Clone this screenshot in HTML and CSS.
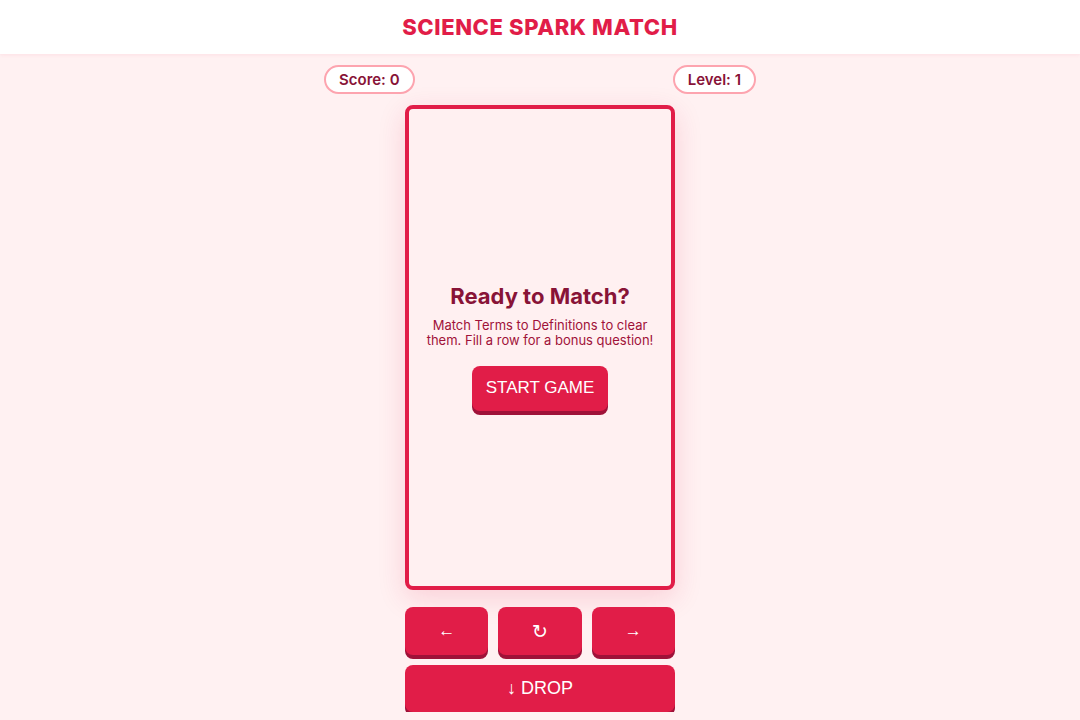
FILE: index.html
```html
<!DOCTYPE html>
<html lang="en">
<head>
    <meta charset="UTF-8">
    <meta name="viewport" content="width=device-width, initial-scale=1.0">
    <title>Science Spark Match</title>
    <link rel="stylesheet" href="styles.css">
</head>
<body>

    <header class="topbar">
        <h1 class="title">SCIENCE SPARK MATCH</h1>
    </header>

    <main class="game">
        <div class="stats">
            <span class="pill">Score: 0</span>
            <span class="pill">Level: 1</span>
        </div>

        <div class="board">
            <div class="intro">
                <h2>Ready to Match?</h2>
                <p>Match Terms to Definitions to clear them. Fill a row for a bonus question!</p>
                <button class="btn start">START GAME</button>
            </div>
        </div>

        <div class="controls">
            <div class="row">
                <button class="btn ctrl">&larr;</button>
                <button class="btn ctrl turn">&#8635;</button>
                <button class="btn ctrl">&rarr;</button>
            </div>
            <button class="btn ctrl drop">&darr; DROP</button>
        </div>
    </main>

</body>
</html>
```

FILE: styles.css
```css
body {
    margin: 0;
    padding: 0;
    font-family: Inter, "Noto Sans", sans-serif;
    background-color: #fff1f2;
    color: #881337;
}

.topbar {
    background: #ffffff;
    height: 54px;
    display: flex;
    align-items: center;
    justify-content: center;
    box-shadow: 0 1px 4px rgba(225, 29, 72, 0.08);
}

.title {
    margin: 0;
    font-size: 22px;
    font-weight: 800;
    letter-spacing: 0.6px;
    color: #e11d48;
}

.game {
    display: flex;
    flex-direction: column;
    align-items: center;
    padding-top: 11px;
}

.stats {
    width: 432px;
    display: flex;
    justify-content: space-between;
    margin-bottom: 11px;
}

.pill {
    background: #ffffff;
    border: 2px solid #fda4af;
    border-radius: 999px;
    height: 25px;
    padding: 0 13px;
    display: flex;
    align-items: center;
    font-size: 15px;
    font-weight: 600;
}

.board {
    width: 262px;
    height: 477px;
    border: 4px solid #e11d48;
    border-radius: 8px;
    background: #fff0f1;
    box-shadow: 0 8px 28px rgba(225, 29, 72, 0.16);
    display: flex;
    align-items: center;
    justify-content: center;
}

.intro {
    text-align: center;
    padding: 0 16px;
    margin-top: -2px;
}

.intro h2 {
    margin: 0 0 9px;
    font-size: 22px;
    font-weight: 700;
}

.intro p {
    margin: 0 0 18px;
    font-size: 13px;
    line-height: 15px;
    color: #9f1239;
}

.btn {
    font-family: "Liberation Sans", Arial, sans-serif;
    background: #e11d48;
    color: #ffffff;
    border: none;
    border-radius: 8px;
    box-shadow: 0 4px 0 #9f1239;
    cursor: pointer;
}

.start {
    width: 136px;
    height: 45px;
    font-size: 17px;
}

.controls {
    width: 270px;
    margin-top: 17px;
    display: flex;
    flex-direction: column;
    gap: 10px;
}

.row {
    display: grid;
    grid-template-columns: repeat(3, 1fr);
    gap: 10px;
}

.ctrl {
    height: 48px;
    font-size: 17px;
}

.turn {
    font-family: "DejaVu Sans", sans-serif;
    font-size: 19px;
}

.drop {
    height: 47px;
    font-size: 18px;
}
```
